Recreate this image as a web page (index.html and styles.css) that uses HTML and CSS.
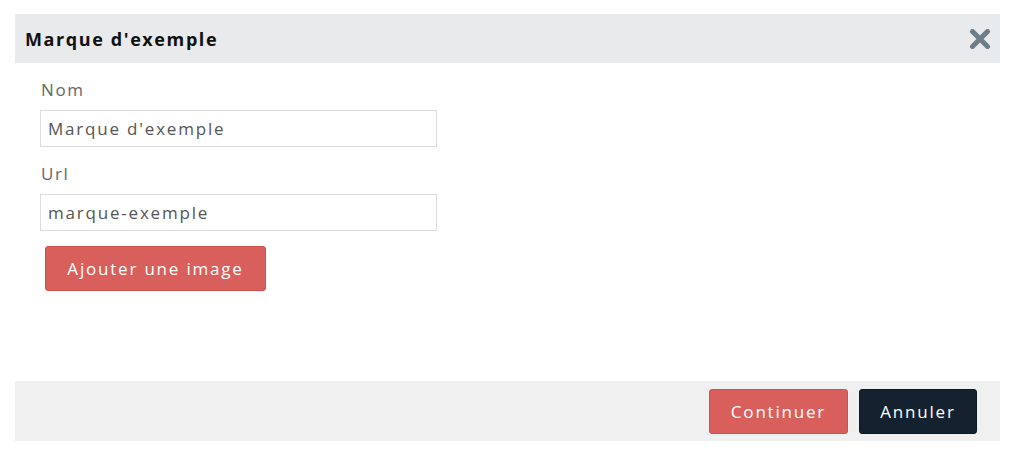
FILE: index.html
```html
<!DOCTYPE html>
<html lang="fr">
<head>
<meta charset="utf-8">
<title>Marque d'exemple</title>
<link rel="stylesheet" href="styles.css">
</head>
<body>
<div class="modal">
  <div class="modal-header">
    <h1 class="modal-title">Marque d'exemple</h1>
    <button class="close" aria-label="Fermer">
      <svg width="22" height="20" viewBox="0 0 22 20"><path d="M3.5 2.5 L18.5 17.5 M18.5 2.5 L3.5 17.5" stroke="#6e7d89" stroke-width="5" stroke-linecap="round"/></svg>
    </button>
  </div>
  <div class="modal-body">
    <div class="field">
      <label class="label">Nom</label>
      <input class="input" type="text" value="Marque d'exemple">
    </div>
    <div class="field">
      <label class="label">Url</label>
      <input class="input" type="text" value="marque-exemple">
    </div>
    <button class="btn btn-red btn-add">Ajouter une image</button>
  </div>
  <div class="modal-footer">
    <button class="btn btn-red btn-continue">Continuer</button>
    <button class="btn btn-dark btn-cancel">Annuler</button>
  </div>
</div>
</body>
</html>
```
FILE: styles.css
```css
* { box-sizing: border-box; }
body {
  margin: 0;
  background: #fff;
  font-family: "Open Sans", "Noto Sans", sans-serif;
}
.modal {
  margin: 14px 0 0 15px;
  width: 985px;
}
.modal-header {
  height: 49px;
  background: #e9eaeb;
  display: flex;
  align-items: center;
  justify-content: space-between;
  padding: 0 8px 0 10px;
}
.modal-title {
  margin: 0;
  font-size: 18px;
  font-weight: 700;
  color: #111;
  letter-spacing: 1.6px;
}
.close {
  border: 0;
  background: none;
  padding: 0;
  width: 24px;
  height: 22px;
  display: flex;
  align-items: center;
  justify-content: center;
}
.modal-body {
  height: 318px;
  padding: 17px 25px 0;
}
.field {
  display: flex;
  flex-direction: column;
  width: 397px;
  margin-bottom: 17px;
}
.field + .field { margin-bottom: 15px; }
.label {
  font-size: 17px;
  color: #666;
  line-height: 20px;
  margin-bottom: 10px;
  padding-left: 1px;
  letter-spacing: 1.6px;
}
.input {
  height: 37px;
  border: 1px solid #dcdcdc;
  border-radius: 0;
  padding: 0 7px;
  font-family: inherit;
  font-size: 17px;
  letter-spacing: 1.8px;
  color: #555;
  outline: none;
}
.btn {
  border: 1px solid transparent;
  border-radius: 3px;
  font-family: inherit;
  font-size: 17px;
  letter-spacing: 1.8px;
  cursor: pointer;
  color: #fff;
  padding: 0;
}
.btn-red {
  background: #d95f5c;
  border-color: #cf504d;
}
.btn-dark {
  background: #14222f;
  border-color: #0d1822;
}
.btn-add {
  margin-left: 5px;
  width: 221px;
  height: 45px;
}
.modal-footer {
  height: 60px;
  background: #f0f0f0;
  display: flex;
  justify-content: flex-end;
  align-items: center;
  gap: 11px;
  padding-right: 23px;
}
.btn-continue { width: 139px; height: 45px; }
.btn-cancel { width: 118px; height: 45px; }
```
